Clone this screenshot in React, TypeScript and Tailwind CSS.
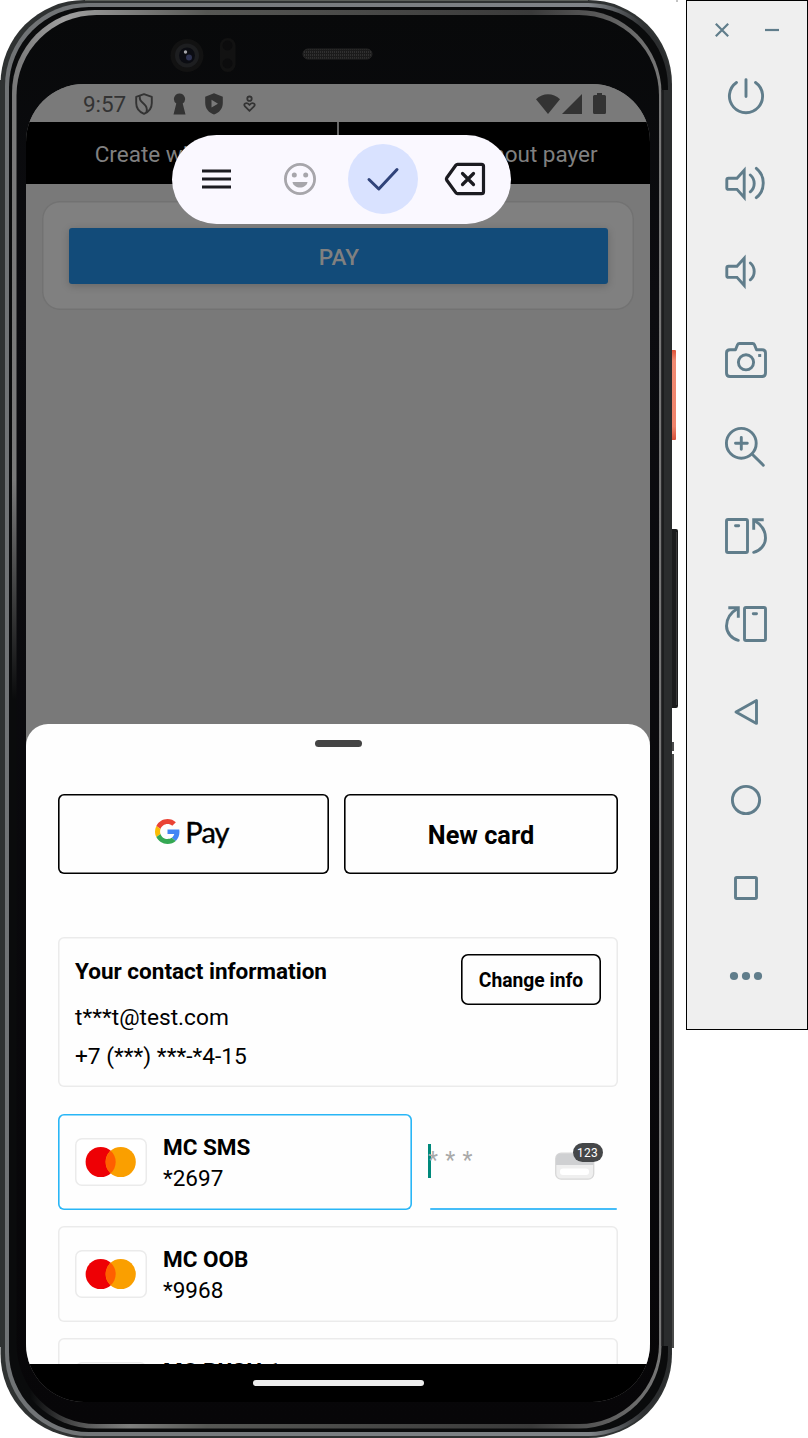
import type { ReactNode } from 'react';

function Bezel() {
  return (
    <svg className="absolute left-0 top-0" width="686" height="1438" viewBox="0 0 686 1438" fill="none" aria-hidden="true">
      <defs>
        <linearGradient id="edge" x1="0" x2="1" y1="0" y2="0">
          <stop offset="0" stopColor="#707375" />
          <stop offset="0.88" stopColor="#808488" />
          <stop offset="0.96" stopColor="#2e3032" />
          <stop offset="1" stopColor="#2a2c2d" />
        </linearGradient>
        <linearGradient id="lip" x1="0" x2="1" y1="0" y2="0">
          <stop offset="0" stopColor="#777777" />
          <stop offset="0.08" stopColor="#a0a0a0" />
          <stop offset="0.3" stopColor="#565754" />
          <stop offset="0.8" stopColor="#3a3a3a" />
          <stop offset="1" stopColor="#777777" />
        </linearGradient>
        <linearGradient id="fade" x1="0" x2="0" y1="0" y2="1">
          <stop offset="0" stopColor="#0a0b0c" stopOpacity="0" />
          <stop offset="1" stopColor="#0a0b0c" />
        </linearGradient>
        <linearGradient id="corner" gradientUnits="userSpaceOnUse" x1="30" x2="130" y1="0" y2="0">
          <stop offset="0" stopColor="#0a0b0c" />
          <stop offset="1" stopColor="#0a0b0c" stopOpacity="0" />
        </linearGradient>
        <linearGradient id="glass" x1="0" x2="0" y1="0" y2="1">
          <stop offset="0" stopColor="#08090a" />
          <stop offset="0.2" stopColor="#0c0c10" />
          <stop offset="1" stopColor="#070608" />
        </linearGradient>
        <linearGradient id="power" x1="0" x2="0" y1="0" y2="1">
          <stop offset="0" stopColor="#dc5238" />
          <stop offset="0.12" stopColor="#f08a72" />
          <stop offset="0.85" stopColor="#ef836b" />
          <stop offset="1" stopColor="#d6503a" />
        </linearGradient>
        <pattern id="mesh" width="2" height="3" patternUnits="userSpaceOnUse">
          <rect width="2" height="3" fill="#1b1b1b" />
          <rect width="1" height="2" fill="#303030" />
        </pattern>
      </defs>
      <rect x="669" y="350" width="7" height="90" rx="1" fill="url(#power)" />
      <rect x="669" y="529" width="9" height="179" rx="2" fill="#1b1c1d" />
      <path d="M676.5 532V705" stroke="#3b3b3b" />
      <path d="M673 742V751M673 754V1348" stroke="#4a4b4b" strokeWidth="2" />
      <path d="M677 0V2" stroke="#888888" />
      <rect x="0" y="80" width="4" height="1267" fill="#2f3232" />
      <rect x="0.5" y="0" width="671.5" height="1438" rx="84" fill="#2f3232" />
      <path d="M85 0.5H588" stroke="#5b5f5a" />
      <rect x="5" y="3" width="666" height="1433" rx="83" fill="url(#edge)" />
      <rect x="9" y="7" width="659" height="1425" rx="80" fill="#0a0b0c" />
      <rect x="662" y="90" width="10" height="1256" fill="#2a2c2d" />
      <rect x="12" y="10" width="649.5" height="1418.5" rx="83" fill="url(#lip)" />
      <rect x="661.5" y="90" width="2.5" height="1256" fill="#1c1d1e" />
      <rect x="11" y="480" width="7" height="220" fill="url(#fade)" />
      <path d="M14.500 700V1345A81 81 0 0 0 95.500 1426H140" stroke="url(#corner)" strokeWidth="7" />
      <rect x="16.5" y="15" width="642.5" height="1409" rx="80" fill="url(#glass)" />
      <circle cx="187" cy="55.5" r="16.5" fill="#121212" />
      <circle cx="187" cy="55.5" r="12" fill="#1d1e20" />
      <circle cx="187" cy="55.5" r="8" fill="#0b0c12" />
      <circle cx="189" cy="57.5" r="3" fill="#2d3150" />
      <circle cx="185.5" cy="52" r="1.7" fill="#a6a6aa" />
      <rect x="220" y="38" width="15.5" height="34" rx="7.5" fill="#121212" />
      <circle cx="227.5" cy="45.500" r="5" fill="#0c0c0d" />
      <circle cx="227.5" cy="63.500" r="5" fill="#0c0c0d" />
      <rect x="303" y="49" width="69" height="10" rx="5" fill="url(#mesh)" stroke="#252525" />
    </svg>
  );
}

function StatusBar() {
  return (
    <div className="flex h-[38px] shrink-0 items-center bg-[#7a7a7a] pl-[57px] pr-[44px] pt-[1px] text-[#333333]">
      <span className="w-[52px] text-[22.500px] leading-[38px] tracking-[-0.1px]">9:57</span>
      <svg width="18" height="22" viewBox="0 0 18 22" fill="none" stroke="currentColor" strokeWidth="1.900">
        <path d="M9 1.200L16.800 3.900V10C16.800 15 13.500 19 9 20.800C4.500 19 1.200 15 1.200 10V3.900Z" strokeLinejoin="round" />
        <path d="M4.800 3C4.200 7 6 8.500 9 11C12 13.500 12.500 15.500 11.500 19" />
      </svg>
      <svg className="ml-[20px]" width="13" height="22" viewBox="0 0 13 22" fill="currentColor">
        <path d="M6.500 .5A5.500 5.500 0 0 0 3.300 10.500L.5 21.500H12.500L9.700 10.500A5.500 5.500 0 0 0 6.500 .5Z" />
      </svg>
      <svg className="ml-[19px]" width="18" height="22" viewBox="0 0 18 22">
        <path d="M9 .3L17.800 3.800V10C17.800 15.500 14 19.900 9 21.600C4 19.900.2 15.500.2 10V3.800Z" fill="currentColor" />
        <path d="M6.500 6.800V14.600L13 10.700Z" fill="#7a7a7a" />
      </svg>
      <svg className="ml-[20px]" width="13" height="18" viewBox="0 0 13 18" fill="none" stroke="currentColor" strokeWidth="1.800">
        <circle cx="6.500" cy="3.700" r="2.200" />
        <path d="M6.500 15.800L2 11.500C-.2 9 3.200 6.500 6.500 9.800C9.800 6.500 13.200 9 11 11.500Z" />
      </svg>
      <div className="ml-auto flex items-center">
        <svg width="24" height="20" viewBox="0 0 24 20" fill="currentColor">
          <path d="M12 20L0 5.200C7 -1.400 17 -1.400 24 5.200Z" />
        </svg>
        <svg className="ml-[2px]" width="20" height="20" viewBox="0 0 20 20" fill="currentColor">
          <path d="M20 0V20H0Z" />
        </svg>
        <svg className="ml-[11px]" width="13" height="21" viewBox="0 0 13 21" fill="currentColor">
          <path d="M4 0H9V2H11.500Q13 2 13 3.500V19.500Q13 21 11.500 21H1.500Q0 21 0 19.500V3.500Q0 2 1.500 2H4Z" />
        </svg>
      </div>
    </div>
  );
}

function KeyboardToolbar() {
  return (
    <div className="absolute left-[146px] top-[51px] flex h-[89px] w-[339px] items-center rounded-full bg-[#faf8ff] pb-[1px] pl-[30px]">
      <svg width="29" height="20" viewBox="0 0 29 20" stroke="#1b1b21" strokeWidth="2.800">
        <path d="M0 2H29M0 10H29M0 18H29" />
      </svg>
      <svg className="ml-[52px]" width="34" height="34" viewBox="0 0 34 34" fill="none">
        <circle cx="17" cy="17" r="14.600" stroke="#a7a6ab" strokeWidth="2.800" />
        <circle cx="11.300" cy="13" r="2.500" fill="#a7a6ab" />
        <circle cx="22.700" cy="13" r="2.500" fill="#a7a6ab" />
        <path d="M9.500 20H24.500C23.500 27.300 10.500 27.300 9.500 20Z" fill="#a7a6ab" />
      </svg>
      <div className="ml-[31px] flex size-[70px] items-center justify-center rounded-full bg-[#d9e2ff]">
        <svg width="34" height="26" viewBox="0 0 34 26" fill="none" stroke="#30437a" strokeWidth="3" strokeLinejoin="round" strokeLinecap="round">
          <path d="M3 13.500L12.800 23L31 3.500" />
        </svg>
      </div>
      <svg className="ml-[26px]" width="42" height="34" viewBox="0 0 42 34" fill="none" stroke="#1b1b21" strokeWidth="3.200" strokeLinejoin="round">
        <path d="M13.500 2.300H37.500Q39.500 2.300 39.500 4.300V29.700Q39.500 31.700 37.500 31.700H13.500Q12.500 31.700 11.800 30.700L2.800 18.300Q2 17 2.800 15.700L11.800 3.300Q12.500 2.300 13.500 2.300Z" />
        <path d="M18.500 11.500L29.500 22.500M29.500 11.500L18.500 22.500" strokeLinecap="round" />
      </svg>
    </div>
  );
}

function GoogleG() {
  return (
    <svg width="25" height="25" viewBox="0 0 48 48">
      <path fill="#EA4335" d="M24 9.500c3.540 0 6.710 1.220 9.210 3.600l6.850-6.850C35.900 2.380 30.470 0 24 0 14.620 0 6.510 5.380 2.560 13.220l7.980 6.190C12.430 13.720 17.740 9.500 24 9.500z" />
      <path fill="#4285F4" d="M46.980 24.550c0-1.570-.15-3.090-.38-4.550H24v9.020h12.940c-.58 2.960-2.260 5.480-4.780 7.180l7.730 6c4.510-4.180 7.090-10.360 7.090-17.650z" />
      <path fill="#FBBC05" d="M10.530 28.590c-.48-1.450-.76-2.990-.76-4.590s.27-3.140.76-4.590l-7.980-6.190C.92 16.460 0 20.120 0 24c0 3.880.92 7.540 2.560 10.780l7.970-6.190z" />
      <path fill="#34A853" d="M24 48c6.480 0 11.930-2.130 15.890-5.810l-7.730-6c-2.150 1.450-4.920 2.300-8.160 2.300-6.260 0-11.570-4.220-13.470-9.910l-7.980 6.190C6.510 42.620 14.620 48 24 48z" />
    </svg>
  );
}

function CardLogo() {
  return (
    <div className="flex h-[48px] w-[72px] shrink-0 items-center justify-center rounded-[7px] bg-white shadow-[inset_0_0_0_1.5px_#ebebeb]">
      <svg width="52" height="32" viewBox="0 0 52 32">
        <circle cx="15.700" cy="16" r="15.100" fill="#ee0005" />
        <circle cx="35.700" cy="16" r="15.100" fill="#fa9f00" />
        <path d="M25.700 4.800A15.100 15.100 0 0 1 25.700 27.200A15.100 15.100 0 0 1 25.700 4.800Z" fill="#ff5f00" />
      </svg>
    </div>
  );
}

function CardRow({ name, digits, className }: { name: string; digits?: string; className: string }) {
  return (
    <div className={'flex h-[96px] shrink-0 rounded-[6px] pl-[17px] pt-[24px] ' + className}>
      <CardLogo />
      <div className="-mt-[6px] ml-[16px] text-[22.500px] leading-[30px] text-black">
        <div className="font-bold">{name}</div>
        {digits && <div className="mt-[1px]">{digits}</div>}
      </div>
    </div>
  );
}

function CvcField() {
  return (
    <div className="relative ml-[15.500px] flex h-[96px] w-[190px] items-start">
      <span className="mt-[30px] h-[34px] w-[3.500px] bg-[#00897b]" />
      <span className="-ml-[3px] mt-[30px] text-[23px] leading-[34px] tracking-[0.8px] text-[#a9a9a9]">* * *</span>
      <svg className="absolute left-[127px] top-[29px]" width="49" height="38" viewBox="0 0 49 38">
        <rect x="0.700" y="10.200" width="38" height="26" rx="5.500" fill="#efefef" stroke="#d8d8d8" strokeWidth="1.300" />
        <path d="M1 22V15.500Q1 10.500 6 10.500H33Q38.500 10.500 38.500 15.500V22Z" fill="#cfd0d2" />
        <rect x="5" y="25.500" width="29" height="6.500" rx="3" fill="#ffffff" />
      </svg>
      <span className="absolute left-[145px] top-[29px] flex h-[19px] w-[30px] items-center justify-center rounded-full bg-[#454749] text-[12px] tracking-[0.2px] text-white">
        123
      </span>
      <span className="absolute bottom-0 left-[2px] h-[2px] w-[187px] rounded-full bg-[#45bdf8]" />
    </div>
  );
}

function PaymentSheet() {
  return (
    <div className="relative flex h-[640px] shrink-0 flex-col overflow-hidden rounded-t-[22px] bg-[#fefefe] px-[32px]">
      <div className="mx-auto mt-[16px] h-[7px] w-[47px] shrink-0 rounded-full bg-[#444444]" />
      <div className="mt-[47px] flex gap-[15px]">
        <button className="flex h-[80px] w-[271px] items-center justify-center rounded-[6px] pb-[5px] pr-[3px] shadow-[inset_0_0_0_1.6px_#000]">
          <span className="flex items-center gap-[5px]">
            <GoogleG />
            <span className="font-['Lato'] text-[29px] leading-[30px] tracking-[-0.9px] text-black [-webkit-text-stroke:0.4px_#000]">Pay</span>
          </span>
        </button>
        <button className="h-[80px] w-[274px] rounded-[6px] pt-[4px] text-[25.300px] font-bold text-black shadow-[inset_0_0_0_1.6px_#000]">
          New card
        </button>
      </div>
      <section className="mt-[63px] flex h-[150px] shrink-0 justify-between rounded-[6px] pl-[17px] pr-[17px] text-[22.500px] text-black shadow-[inset_0_0_0_1.5px_#ebebeb]">
        <div>
          <h2 className="mt-[18px] font-bold leading-[32px]">Your contact information</h2>
          <p className="mt-[15px] text-[22.700px] leading-[32px]">t***t@test.com</p>
          <p className="mt-[7px] text-[22.700px] leading-[32px]">+7 (***) ***-*4-15</p>
        </div>
        <button className="mt-[17px] h-[51px] w-[140px] rounded-[7px] pt-[3px] text-[19.300px] font-bold shadow-[inset_0_0_0_1.6px_#000]">
          Change info
        </button>
      </section>
      <div className="mt-[27px] flex">
        <CardRow name="MC SMS" digits="*2697" className="w-[354px] shadow-[inset_0_0_0_1.6px_#29b6f6]" />
        <CvcField />
      </div>
      <CardRow name="MC OOB" digits="*9968" className="mt-[16px] shadow-[inset_0_0_0_1.5px_#ebebeb]" />
      <CardRow name="MC PUSH 1" className="mt-[16px] shadow-[inset_0_0_0_1.5px_#ebebeb]" />
    </div>
  );
}

function Phone() {
  return (
    <div className="relative h-[1438px] w-[686px] shrink-0 pl-[26px] pt-[84px]">
      <Bezel />
      <main className="relative flex h-[1318px] w-[624px] flex-col overflow-hidden rounded-[58px] bg-[#797979]">
        <StatusBar />
        <nav className="flex h-[62px] shrink-0 bg-black text-[22.500px] text-[#808080]">
          <div className="flex w-[313px] items-center justify-center border-r-2 border-[#666666] pt-[3px]">Create with payer</div>
          <div className="flex flex-1 items-center justify-center pt-[3px]">Create without payer</div>
        </nav>
        <div className="h-[540px] shrink-0 px-[16px] pt-[17px]">
          <div className="h-[109px] rounded-[18px] bg-[#808080] pl-[27px] pr-[26px] pt-[27px] shadow-[inset_0_0_0_1.5px_#727272]">
            <button className="block h-[56px] w-full rounded-[3px] bg-[#124b79] pl-[1px] pt-[3px] text-[22.600px] font-medium text-[#808080] shadow-[0_2px_8px_rgba(0,0,0,0.2)]">
              PAY
            </button>
          </div>
        </div>
        <PaymentSheet />
        <div className="flex h-[38px] shrink-0 justify-center bg-black pt-[16px]">
          <div className="h-[6px] w-[171px] rounded-full bg-[#eeeeee]" />
        </div>
        <KeyboardToolbar />
      </main>
    </div>
  );
}

const speaker = 'M13 16.2L20.200 8.300V35.400L13 27.400H4.500Q2.800 27.400 2.800 25.700V17.900Q2.800 16.200 4.500 16.200Z';

const rotate = (
  <>
    <rect x="2.500" y="5.500" width="21" height="33" rx="1.500" />
    <path d="M11.500 11.700H14.700" strokeLinecap="round" />
    <path d="M39.700 5.700H29.700V15.700" />
    <path d="M30.500 6.500C38 11 41.500 17 41.500 24C41.500 31 36 37 29.700 38.400" strokeLinecap="round" />
  </>
);

const controls: { label: string; icon: ReactNode }[] = [
  { label: 'Power', icon: <path d="M12.500 8.500A16.600 16.600 0 1 0 31.500 8.500M22 5.600V22.500" strokeLinecap="round" /> },
  {
    label: 'Volume up',
    icon: (
      <>
        <path d={speaker} />
        <path d="M26.300 13A11 11 0 0 1 26.300 29.800M32.300 6.300A19 19 0 0 1 32.300 35.700" strokeLinecap="round" />
      </>
    ),
  },
  {
    label: 'Volume down',
    icon: (
      <>
        <path d={speaker} />
        <path d="M26.300 13A11 11 0 0 1 26.300 29.800" strokeLinecap="round" />
      </>
    ),
  },
  {
    label: 'Take screenshot',
    icon: (
      <>
        <path
          strokeLinejoin="round"
          d="M6 11.800H11.500L13.500 6.800Q14 5.500 15.500 5.500H28.500Q30 5.500 30.500 6.800L32.500 11.800H38Q41.500 11.800 41.500 15V35Q41.500 38.500 38 38.500H6Q2.500 38.500 2.500 35V15Q2.500 11.800 6 11.800Z"
        />
        <circle cx="22" cy="24.300" r="7.600" />
        <path d="M34.200 17.500H37.200" />
      </>
    ),
  },
  {
    label: 'Zoom',
    icon: (
      <>
        <circle cx="17.300" cy="17.300" r="14.900" />
        <path d="M28.500 28.500L39.300 39.200M11.500 17.300H23.300M17.300 11.400V23.200" strokeLinecap="round" />
      </>
    ),
  },
  { label: 'Rotate left', icon: rotate },
  { label: 'Rotate right', icon: <g transform="matrix(-1 0 0 1 44 0)">{rotate}</g> },
  { label: 'Back', icon: <path d="M12 22L32.500 10.600V33.400Z" strokeLinejoin="round" /> },
  { label: 'Home', icon: <circle cx="22" cy="22" r="13.600" /> },
  { label: 'Overview', icon: <rect x="11.500" y="11.500" width="21" height="21" rx="1.200" /> },
  {
    label: 'More',
    icon: (
      <g fill="#607d8b" stroke="none">
        <circle cx="10" cy="22" r="4.100" />
        <circle cx="22" cy="22" r="4.100" />
        <circle cx="34" cy="22" r="4.100" />
      </g>
    ),
  },
];

function EmulatorControls() {
  return (
    <aside className="flex h-[1030px] w-[122px] shrink-0 flex-col border border-black bg-[#efefef] text-[#607d8b]">
      <div className="flex h-[51px] shrink-0 items-start gap-[36px] pl-[28px] pt-[22px]">
        <svg width="14" height="14" viewBox="0 0 14 14" stroke="currentColor" strokeWidth="2.200">
          <path d="M.8 .8L13.200 13.200M13.200 .8L.8 13.200" />
        </svg>
        <svg width="14" height="14" viewBox="0 0 14 14" stroke="currentColor" strokeWidth="2.200">
          <path d="M0 7H14" />
        </svg>
      </div>
      {controls.map((c) => (
        <button key={c.label} aria-label={c.label} className="flex h-[88px] shrink-0 items-center pl-[37px]">
          <svg width="44" height="44" viewBox="0 0 44 44" fill="none" stroke="currentColor" strokeWidth="2.900">
            {c.icon}
          </svg>
        </button>
      ))}
    </aside>
  );
}

export default function App() {
  return (
    <div className="flex h-[1438px] w-[808px] items-start overflow-hidden bg-white font-['Roboto',sans-serif]">
      <Phone />
      <EmulatorControls />
    </div>
  );
}
